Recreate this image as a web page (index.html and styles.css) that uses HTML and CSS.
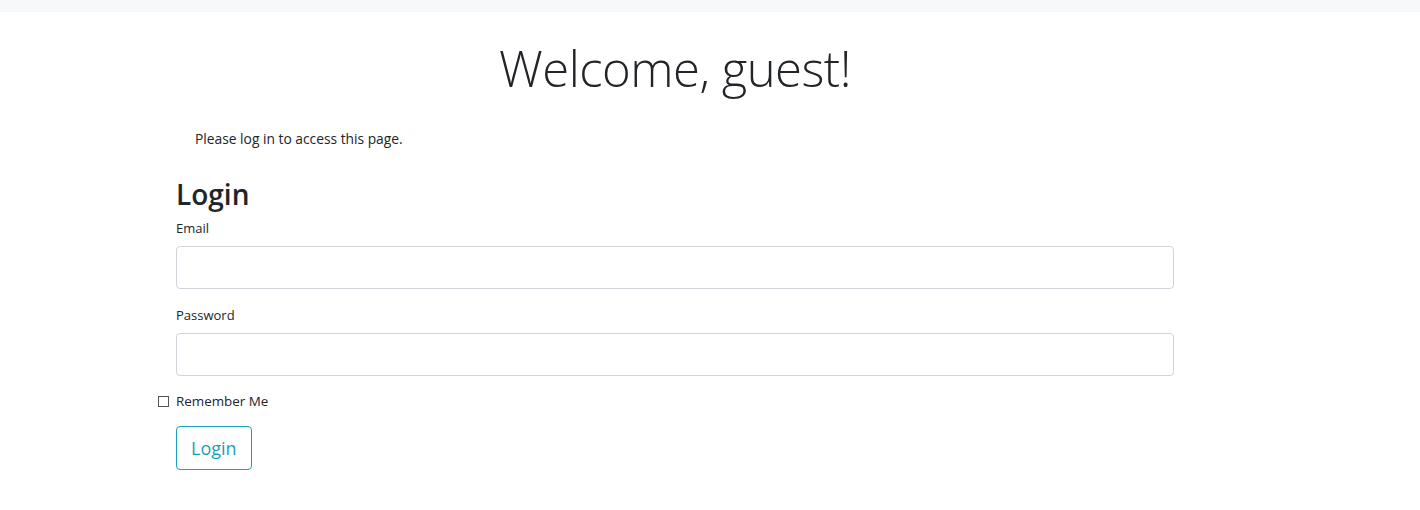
FILE: index.html
```html
<!DOCTYPE html>
<html lang="en">
<head>
<meta charset="utf-8">
<title>Welcome</title>
<link rel="stylesheet" href="styles.css">
</head>
<body>
<div class="topbar"></div>
<main class="page">
  <h1 class="welcome">Welcome, guest!</h1>
  <p class="notice">Please log in to access this page.</p>
  <form class="login-form">
    <h2 class="form-title">Login</h2>
    <div class="field">
      <label class="label" for="email">Email</label>
      <input class="input" id="email" type="text">
    </div>
    <div class="field">
      <label class="label" for="password">Password</label>
      <input class="input" id="password" type="password">
    </div>
    <div class="check">
      <span class="checkbox"></span>
      <label class="check-label">Remember Me</label>
    </div>
    <button class="btn" type="button">Login</button>
  </form>
</main>
</body>
</html>
```
FILE: styles.css
```css
html, body {
  margin: 0;
  padding: 0;
  background: #fff;
}
body {
  font-family: "Open Sans", "Noto Sans", sans-serif;
  color: #212529;
  font-size: 13px;
}
.topbar {
  height: 12px;
  background: #f7f8fa;
}
.page {
  width: 998px;
  margin-left: 176px;
}
.welcome {
  margin: 24px 0 0;
  text-align: center;
  font-weight: 300;
  font-size: 49px;
  line-height: 64px;
  color: #212529;
  letter-spacing: -0.5px;
}
.notice {
  margin: 29px 0 0 19px;
  font-size: 13.8px;
  line-height: 20px;
}
.login-form {
  margin-top: 28px;
}
.form-title {
  margin: 0 0 7px;
  font-size: 28px;
  font-weight: 600;
  line-height: 34px;
}
.field {
  display: flex;
  flex-direction: column;
}
.label {
  font-size: 13px;
  line-height: 20px;
  margin: 0 0 8px;
}
.input {
  height: 43px;
  box-sizing: border-box;
  border: 1px solid #ced4da;
  border-radius: 4px;
  margin: 0 0 16px;
}
.check {
  display: flex;
  align-items: center;
  margin-left: -18px;
  height: 20px;
  margin-top: -1px;
}
.checkbox {
  width: 11px;
  height: 11px;
  border: 1px solid #555;
  box-sizing: border-box;
  margin-right: 7px;
}
.check-label {
  font-size: 13.4px;
}
.btn {
  margin-top: 15px;
  height: 44px;
  padding: 0 14px;
  background: #fff;
  border: 1px solid #17a2b8;
  border-radius: 4px;
  color: #17a2b8;
  font-family: inherit;
  font-size: 18px;
}
```
